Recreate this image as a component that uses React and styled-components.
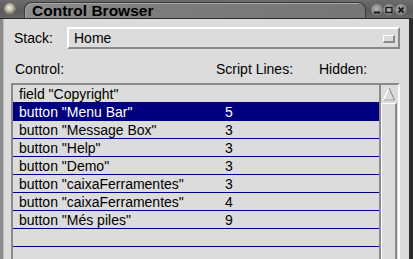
import React from 'react';
import styled, { createGlobalStyle } from 'styled-components';

const Global = createGlobalStyle`
    html, body {
        margin: 0;
        padding: 0;
        background: #dcdcdc;
        overflow: hidden;
    }
`;

const Window = styled.div`
    width: 413px;
    height: 259px;
    display: flex;
    flex-direction: column;
    overflow: hidden;
    font-family: "Liberation Sans", Arial, sans-serif;
    font-size: 14px;
    color: #000;
`;

const TitleBar = styled.div`
    height: 18px;
    flex: none;
    display: flex;
    align-items: flex-end;
    padding: 0 6px 0 4px;
    background: linear-gradient(#6c6c6c, #5a5a5a 60%, #666);
    border-bottom: 1px solid #2a2a2a;
`;

const Bead = styled.div`
    width: 12px;
    height: 12px;
    margin-bottom: 3px;
    border-radius: 50%;
    flex: none;
    background: radial-gradient(circle at 45% 40%, #f4f0e8 0, #c8c2b4 30%, #7a7468 65%, #2e2e2e 100%);
`;

const TitlePill = styled.div`
    flex: 1;
    height: 15px;
    margin-left: 8px;
    margin-right: 5px;
    padding-left: 7px;
    border: 1px solid #3a3a3a;
    border-bottom: none;
    border-radius: 8px 8px 0 0 / 8px 8px 0 0;
    background: linear-gradient(90deg, #8e8e8e, #7c7c7c 40%, #767676);
    box-shadow: inset 1px 1px 0 #a8a8a8;
    font-weight: bold;
    font-size: 15.5px;
    line-height: 16px;
    white-space: nowrap;
`;

const WinButtons = styled.div`
    display: flex;
    margin-bottom: 2px;
`;

const WinButton = styled.div`
    width: 12px;
    height: 12px;
    border-radius: 50%;
    background: radial-gradient(circle at 45% 40%, #b4b4b4 0, #8a8a8a 50%, #3c3c3c 100%);
    display: flex;
    align-items: center;
    justify-content: center;
`;

const Body = styled.div`
    flex: 1;
    display: flex;
    flex-direction: column;
    min-height: 0;
    padding: 8px 9px 0 8px;
    border-left: 3px solid #8c8c8c;
    border-right: 4px solid #2c2c2c;
    box-shadow: inset 1px 0 0 #bdbdbd;
    background: #dcdcdc;
`;

const StackRow = styled.div`
    display: flex;
    align-items: center;
    height: 22px;
`;

const Label = styled.span`
    padding-left: ${p => p.$pad || 0}px;
    width: ${p => p.$w ? p.$w + 'px' : 'auto'};
    flex: none;
    white-space: nowrap;
`;

const Combo = styled.div`
    flex: 1;
    height: 22px;
    box-sizing: border-box;
    display: flex;
    align-items: center;
    justify-content: space-between;
    padding: 0 3px 0 5px;
    border-top: 2px solid #fff;
    border-left: 2px solid #fff;
    border-bottom: 2px solid #8a8a8a;
    border-right: 2px solid #8a8a8a;
    font-size: 14px;
`;

const ComboKnob = styled.div`
    width: 9px;
    height: 5px;
    border-top: 1px solid #fff;
    border-left: 1px solid #fff;
    border-bottom: 2px solid #8a8a8a;
    border-right: 2px solid #8a8a8a;
    margin-top: 1px;
`;

const Headers = styled.div`
    display: flex;
    align-items: center;
    height: 34px;
    padding-top: 6px;
    box-sizing: border-box;
    padding-left: 4px;
`;

const ListBox = styled.div`
    flex: 1;
    display: flex;
    min-height: 0;
    border-top: 2px solid #8a8a8a;
    border-left: 2px solid #8a8a8a;
    border-right: 2px solid #fff;
`;

const Rows = styled.div`
    flex: 1;
    display: flex;
    flex-direction: column;
`;

const Row = styled.div`
    height: 18px;
    flex: none;
    box-sizing: border-box;
    display: flex;
    align-items: center;
    padding-left: 6px;
    border-bottom: 1px solid #000080;
    background: ${p => p.$selected ? '#000080' : 'transparent'};
    color: ${p => p.$selected ? '#fff' : '#000'};
    white-space: nowrap;
`;

const NameCell = styled.span`
    width: 206px;
    flex: none;
`;

const Scrollbar = styled.div`
    width: 17px;
    flex: none;
    display: flex;
    flex-direction: column;
    border-left: 2px solid #8a8a8a;
`;

const ArrowButton = styled.div`
    height: 17px;
    flex: none;
    width: 16px;
    display: flex;
    align-items: center;
    justify-content: center;
`;

const Thumb = styled.div`
    flex: 1;
    margin-top: 1px;
    width: 13px;
    border-top: 1px solid #fff;
    border-left: 1px solid #fff;
    border-right: 2px solid #8a8a8a;
`;

const items = [
    { name: 'field "Copyright"', lines: '' },
    { name: 'button "Menu Bar"', lines: '5', selected: true },
    { name: 'button "Message Box"', lines: '3' },
    { name: 'button "Help"', lines: '3' },
    { name: 'button "Demo"', lines: '3' },
    { name: 'button "caixaFerramentes"', lines: '3' },
    { name: 'button "caixaFerramentes"', lines: '4' },
    { name: 'button "Més piles"', lines: '9' },
    { name: '', lines: '' },
    { name: '', lines: '' },
];

export default function App() {
    return (
        <Window>
            <Global />
            <TitleBar>
                <Bead />
                <TitlePill>Control Browser</TitlePill>
                <WinButtons>
                    <WinButton>
                        <svg width="8" height="8" viewBox="0 0 8 8">
                            <rect x="1" y="5.5" width="6" height="2" fill="#1a1a1a" />
                        </svg>
                    </WinButton>
                    <WinButton>
                        <svg width="8" height="8" viewBox="0 0 8 8">
                            <rect x="1" y="1.5" width="6" height="5" fill="none" stroke="#1a1a1a" strokeWidth="1.4" />
                        </svg>
                    </WinButton>
                    <WinButton>
                        <svg width="8" height="8" viewBox="0 0 8 8">
                            <path d="M1.5 1.5 L6.5 6.5 M6.5 1.5 L1.5 6.5" stroke="#1a1a1a" strokeWidth="1.8" />
                        </svg>
                    </WinButton>
                </WinButtons>
            </TitleBar>
            <Body>
                <StackRow>
                    <Label $pad={3} $w={53}>Stack:</Label>
                    <Combo>
                        <span>Home</span>
                        <ComboKnob />
                    </Combo>
                </StackRow>
                <Headers>
                    <Label $w={201}>Control:</Label>
                    <Label $w={103}>Script Lines:</Label>
                    <Label>Hidden:</Label>
                </Headers>
                <ListBox>
                    <Rows>
                        {items.map((it, i) => (
                            <Row key={i} $selected={it.selected}>
                                <NameCell>{it.name}</NameCell>
                                <span>{it.lines}</span>
                            </Row>
                        ))}
                    </Rows>
                    <Scrollbar>
                        <ArrowButton>
                            <svg width="14" height="14" viewBox="0 0 14 14">
                                <path d="M7 1 L1.5 13 L12.5 13 Z" fill="#dcdcdc" stroke="#fff" strokeWidth="1.5" />
                                <path d="M7 1 L12.5 13 L1.5 13" fill="none" stroke="#8a8a8a" strokeWidth="1.2" />
                            </svg>
                        </ArrowButton>
                        <Thumb />
                    </Scrollbar>
                </ListBox>
            </Body>
        </Window>
    );
}
